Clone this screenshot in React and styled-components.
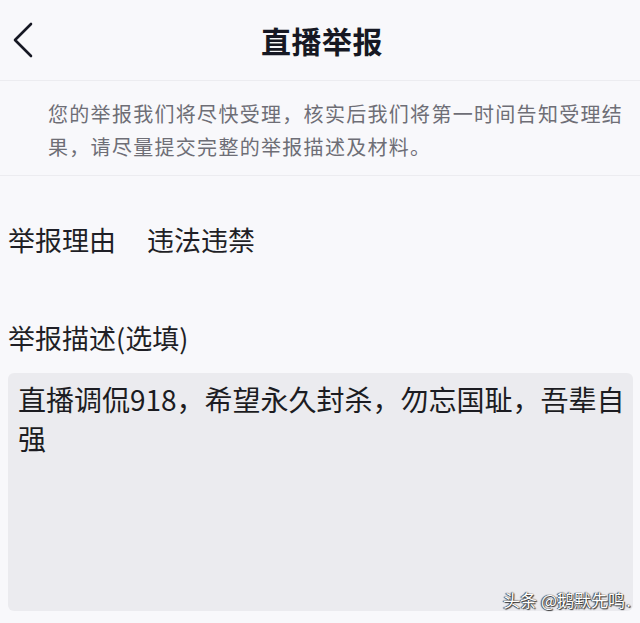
import React from 'react';
import styled, { createGlobalStyle } from 'styled-components';

const GlobalStyle = createGlobalStyle`
  html, body {
    margin: 0;
    padding: 0;
    background: #f8f8fb;
  }
  body {
    font-family: "Noto Sans CJK SC", "Noto Sans", sans-serif;
    color: #1c1c22;
  }
`;

const Page = styled.div`
  width: 640px;
  height: 623px;
  overflow: hidden;
  background: #f8f8fb;
`;

const Header = styled.div`
  height: 80px;
  display: grid;
  grid-template-columns: 1fr auto 1fr;
  align-items: center;
  border-bottom: 1px solid #ececf0;
`;

const Back = styled.div`
  padding-left: 12px;
  display: flex;
  align-items: center;
`;

const Title = styled.div`
  font-size: 30px;
  font-weight: 700;
  color: #161823;
  letter-spacing: 0.5px;
  padding-left: 4px;
`;

const Notice = styled.div`
  padding: 16px 8px 12px 48px;
  font-size: 20px;
  line-height: 33px;
  letter-spacing: 1.3px;
  color: #6e6e76;
  border-bottom: 1px solid #ececf0;
`;

const Form = styled.div`
  padding: 0 7px 0 8px;
`;

const Field = styled.div`
  margin-top: ${p => p.gap}px;
  display: flex;
  gap: 31px;
  font-size: 27px;
  line-height: 40px;
  color: #1f1f26;
`;

const TextBox = styled.div`
  margin-top: 15px;
  height: 238px;
  box-sizing: border-box;
  padding: 7px 2px 7px 10px;
  border-radius: 6px;
  background: #ebebef;
  font-size: 28px;
  line-height: 39px;
  color: #1c1c22;
  position: relative;
`;

const Watermark = styled.div`
  position: absolute;
  right: 8px;
  bottom: 2px;
  font-size: 17px;
  line-height: 18px;
  color: #ffffff;
  text-shadow: 0 0 1px #222, 1px 1px 1px #333, -1px 0 1px #444;
`;

const Dot = styled.span`
  position: absolute;
  right: -6px;
  bottom: 0;
`;

export default function App() {
  return (
    <Page>
      <GlobalStyle />
      <Header>
        <Back>
          <svg width="24" height="36" viewBox="0 0 24 36">
            <polyline points="19,2 3,18 19,34" fill="none" stroke="#161823" strokeWidth="2.6" strokeLinecap="round" strokeLinejoin="round" />
          </svg>
        </Back>
        <Title>直播举报</Title>
        <div />
      </Header>
      <Notice>
        您的举报我们将尽快受理，核实后我们将第一时间告知受理结果，请尽量提交完整的举报描述及材料。
      </Notice>
      <Form>
        <Field gap={44}>
          <span>举报理由</span>
          <span>违法违禁</span>
        </Field>
        <Field gap={58}>
          <span>举报描述(选填)</span>
        </Field>
        <TextBox>
          直播调侃918，希望永久封杀，勿忘国耻，吾辈自强
          <Watermark>头条 @鹅默先鸣<Dot>.</Dot></Watermark>
        </TextBox>
      </Form>
    </Page>
  );
}
